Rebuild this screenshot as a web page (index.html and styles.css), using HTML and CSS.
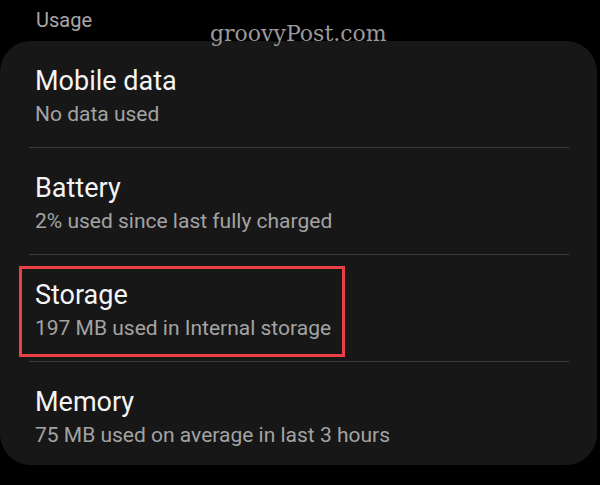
FILE: index.html
```html
<!DOCTYPE html>
<html lang="en">

<head>
    <meta charset="utf-8">
    <link rel="stylesheet" href="styles.css">
</head>

<body>
    <div class="watermark">groovyPost.com</div>
    <h2 class="section-title">Usage</h2>
    <div class="card">
        <div class="item">
            <div class="item-title">Mobile data</div>
            <div class="item-sub">No data used</div>
        </div>
        <hr class="divider">
        <div class="item">
            <div class="item-title">Battery</div>
            <div class="item-sub">2% used since last fully charged</div>
        </div>
        <hr class="divider">
        <div class="item">
            <div class="item-title">Storage</div>
            <div class="item-sub">197 MB used in Internal storage</div>
            <div class="highlight"></div>
        </div>
        <hr class="divider">
        <div class="item last">
            <div class="item-title">Memory</div>
            <div class="item-sub">75 MB used on average in last 3 hours</div>
        </div>
    </div>
</body>

</html>
```

FILE: styles.css
```css
html,
body {
    margin: 0;
    background-color: #000;
}

body {
    position: relative;
    width: 600px;
    height: 485px;
    overflow: hidden;
    font-family: Roboto, "Noto Sans", sans-serif;
}

.watermark {
    position: absolute;
    top: 20px;
    left: 210px;
    font-family: "DejaVu Serif", serif;
    font-size: 22px;
    line-height: 28px;
    color: #9a9a9a;
    z-index: 2;
}

.section-title {
    margin: 0;
    padding: 10px 0 0 36px;
    height: 41px;
    box-sizing: border-box;
    font-size: 20px;
    font-weight: 400;
    line-height: 20px;
    color: #a8a8a8;
}

.card {
    width: 597px;
    background-color: #171717;
    border-radius: 31px;
}

.item {
    position: relative;
    padding: 25px 0 19px 35px;
}

.item.last {
    padding-bottom: 16px;
}

.item-title {
    font-size: 27px;
    line-height: 30px;
    color: #f4f4f4;
}

.item-sub {
    margin-top: 4px;
    font-size: 21px;
    line-height: 28px;
    color: #a3a3a3;
}

.divider {
    margin: 0 28px 0 29px;
    border: none;
    height: 1px;
    background-color: #3c3c3c;
}

.highlight {
    position: absolute;
    top: 11px;
    left: 19px;
    width: 326px;
    height: 91px;
    box-sizing: border-box;
    border: 3px solid #ec3f46;
}
```
